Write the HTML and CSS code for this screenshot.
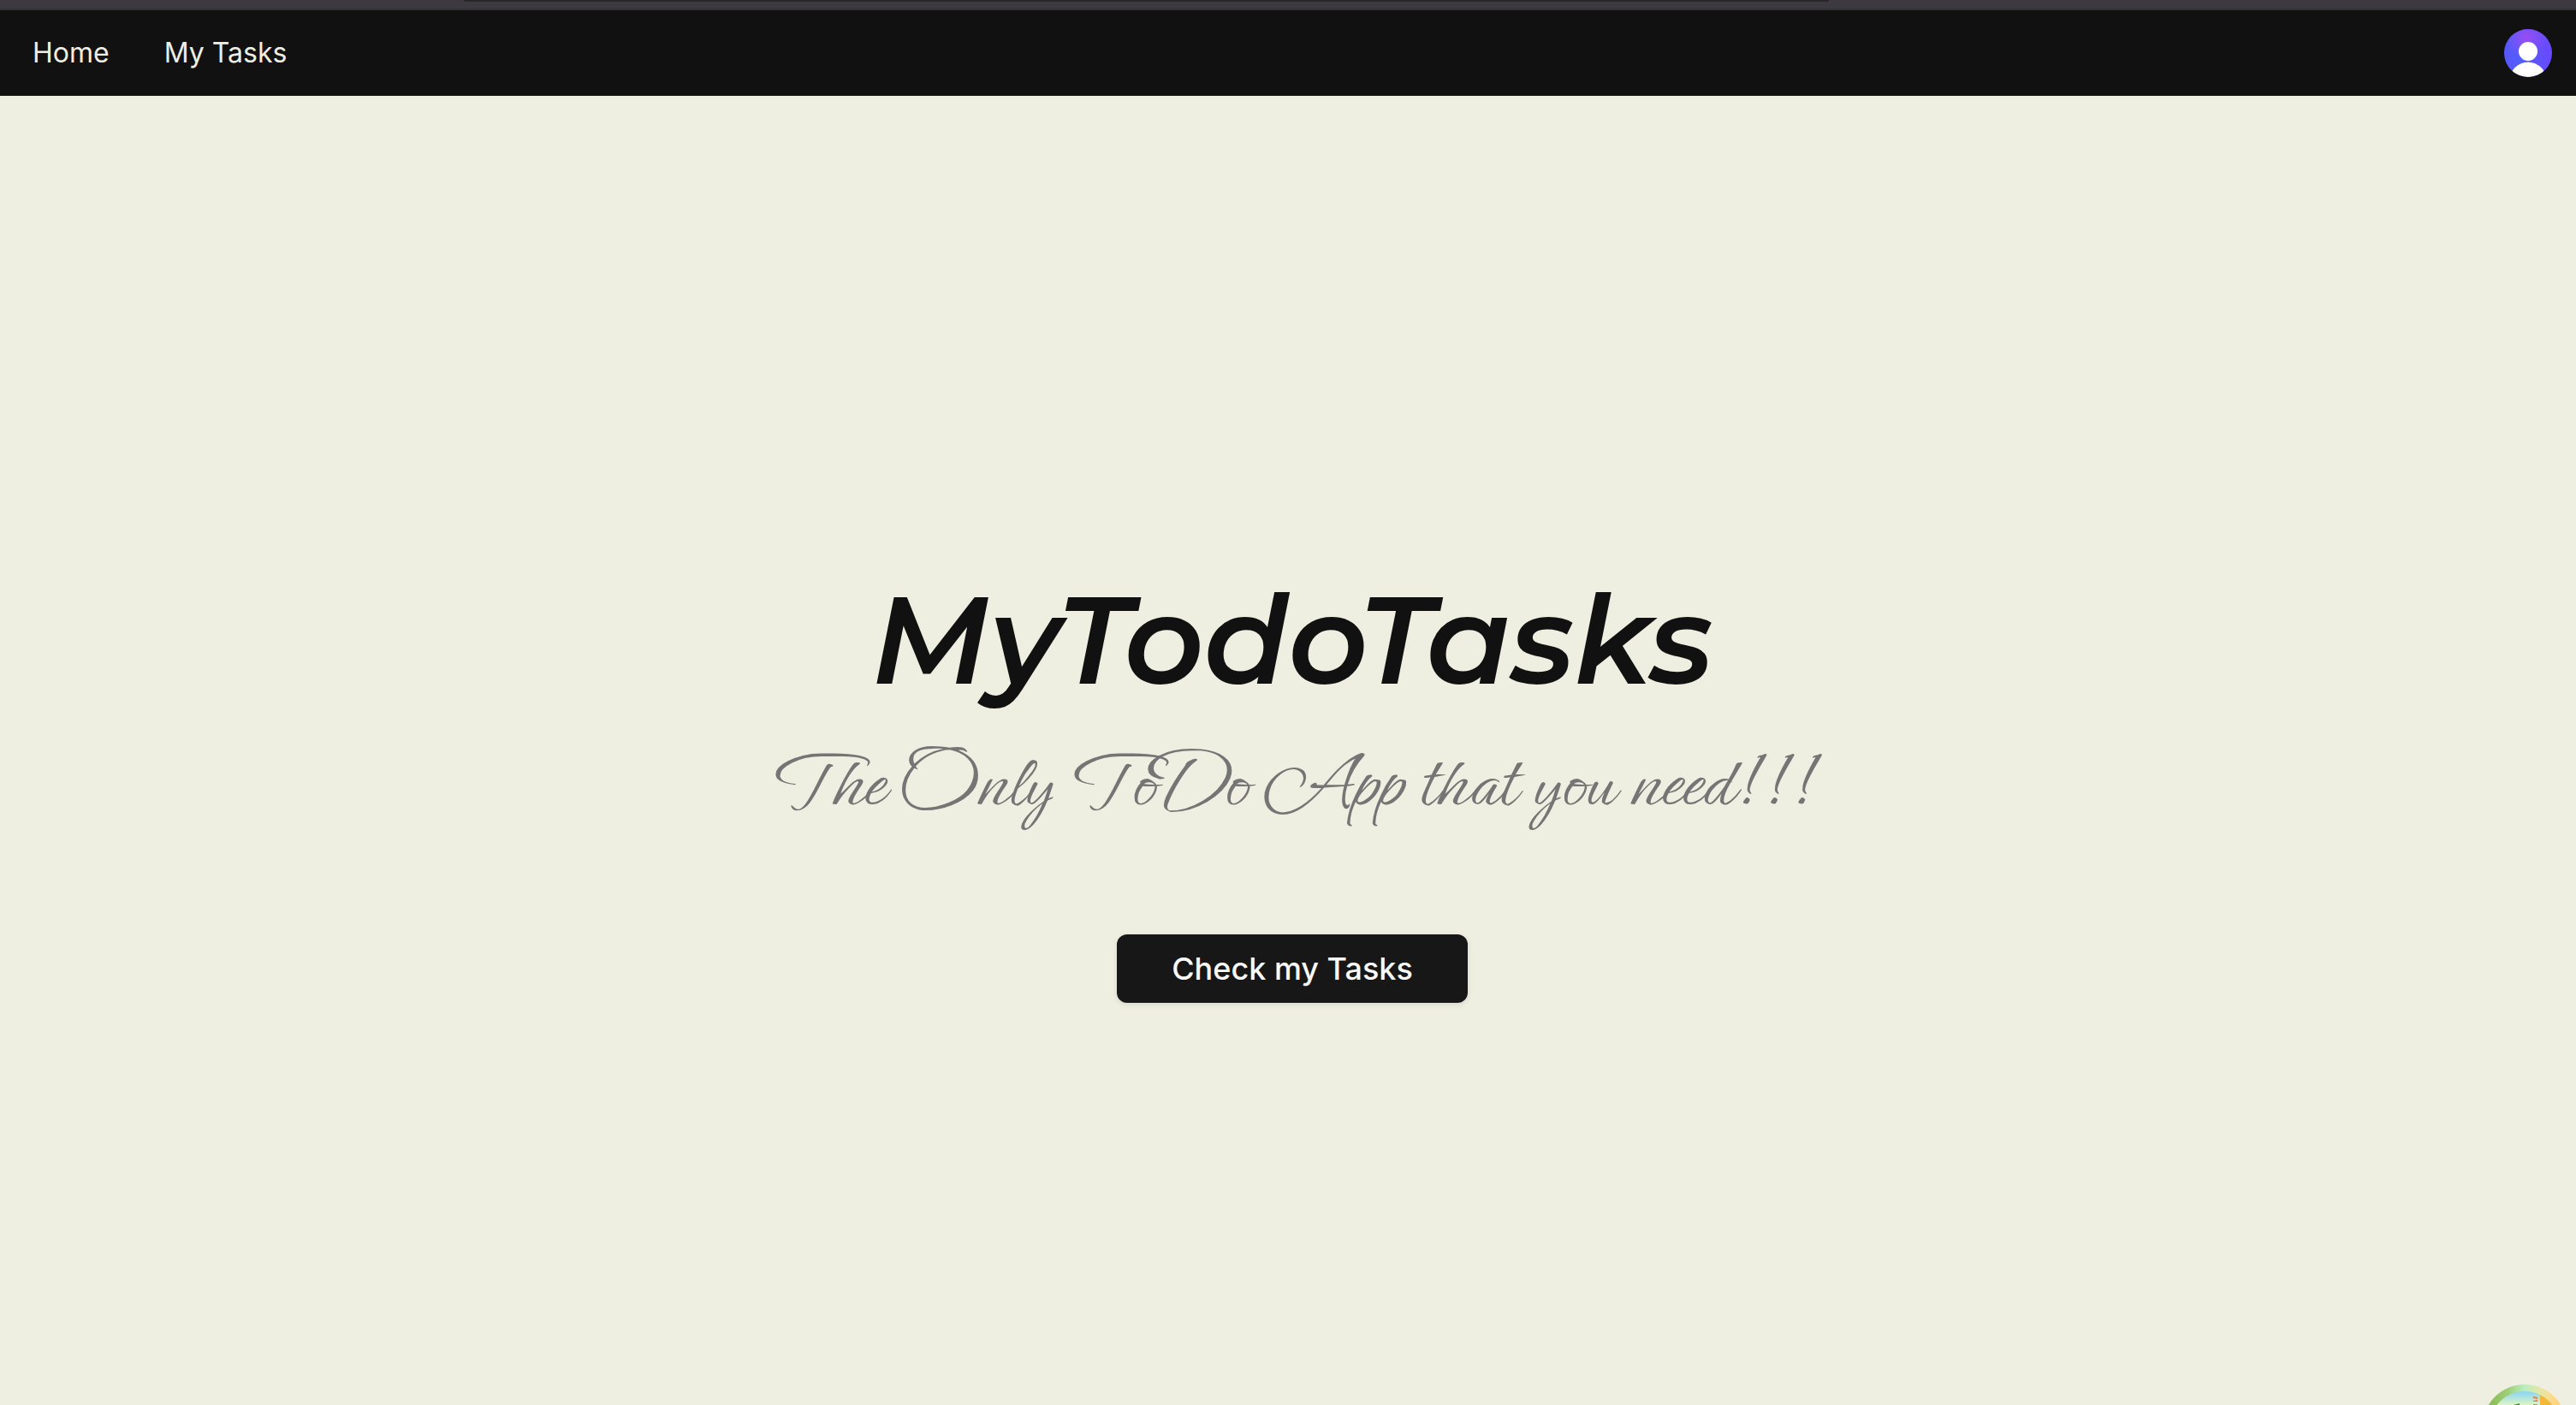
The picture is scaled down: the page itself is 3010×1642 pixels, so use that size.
FILE: index.html
```html
<!DOCTYPE html>
<html lang="en">
<head>
<meta charset="utf-8">
<meta name="viewport" content="width=device-width, initial-scale=1">
<title>MyTodoTasks</title>
<link rel="stylesheet" href="styles.css">
</head>
<body>
<div class="window-bar"><div class="window-field"></div></div>
<header class="navbar">
  <nav class="nav-links">
    <a href="#">Home</a>
    <a href="#tasks">My Tasks</a>
  </nav>
  <button class="avatar" type="button" aria-label="Account">
    <svg viewBox="0 0 56 56" aria-hidden="true">
      <defs>
        <radialGradient id="violet" cx="26" cy="10" r="24" gradientUnits="userSpaceOnUse"><stop offset="0" stop-color="#9a4df2"/><stop offset="1" stop-color="#9a4df2" stop-opacity="0"/></radialGradient>
        <linearGradient id="base" x1="0" y1="0.6" x2="1" y2="0.4"><stop offset="0" stop-color="#5758fa"/><stop offset="0.35" stop-color="#525cfb"/><stop offset="1" stop-color="#6c47ff"/></linearGradient>
        <clipPath id="disc"><circle cx="28" cy="28" r="28"/></clipPath>
      </defs>
      <g clip-path="url(#disc)">
        <rect width="56" height="56" fill="url(#base)"/>
        <rect width="56" height="56" fill="url(#violet)"/>
        <circle cx="28" cy="26" r="11" fill="#fff"/>
        <circle cx="28" cy="60" r="21.500" fill="#fff"/>
      </g>
    </svg>
  </button>
</header>
<main class="hero">
  <h1>MyTodoTasks</h1>
  <p class="tagline">The Only ToDo App that you need!!!</p>
  <button class="cta" type="button">Check my Tasks</button>
</main>
<svg class="badge" viewBox="0 0 98 98" aria-hidden="true">
  <defs>
    <linearGradient id="ring"><stop offset="0.05" stop-color="#86b94e"/><stop offset="0.3" stop-color="#9fce78"/><stop offset="0.5" stop-color="#b9edc0"/><stop offset="0.7" stop-color="#e8e6a4"/><stop offset="0.85" stop-color="#ffd883"/><stop offset="1" stop-color="#ffc860"/></linearGradient>
    <linearGradient id="sky" x2="0" y2="1"><stop offset="0.08" stop-color="#86d4f8"/><stop offset="0.25" stop-color="#e2f5c0"/><stop offset="1" stop-color="#f3f8b0"/></linearGradient>
    <clipPath id="face"><circle cx="49" cy="49" r="41"/></clipPath>
  </defs>
  <circle cx="49" cy="49" r="49" fill="url(#ring)"/>
  <g clip-path="url(#face)">
    <rect width="98" height="98" fill="url(#sky)"/>
    <path d="M67 10h31v80H67z" fill="#f5b738"/>
    <path d="M59 14l5 1v2l-5-1zM59 19l5-1v2h-5zM59 23h5v2h-5z" fill="#ec7a3c"/>
    <path d="M36 24l7-2v3h-4v-1z" fill="#4a913a"/>
  </g>
</svg>
</body>
</html>
```
FILE: styles.css
```css
* { box-sizing: border-box; }
html { height: 100%; }
body {
  position: relative;
  display: flex;
  flex-direction: column;
  min-height: 100%;
  margin: 0;
  overflow: hidden;
  background: #eeeee1;
  color: #111;
  font-family: Inter, sans-serif;
}
.window-bar {
  height: 12px;
  background: #3c3a40;
  border-bottom: 2px solid #323135;
}
.window-field {
  width: 53%;
  height: 2px;
  margin-left: 18%;
  border-radius: 0 0 8px 8px;
  background: #27262b;
}
.navbar {
  display: flex;
  align-items: center;
  justify-content: space-between;
  height: 100px;
  padding: 0 28px 0 38px;
  background: #111;
}
.nav-links { display: flex; gap: 64px; }
.nav-links a {
  color: #eeeee1;
  font-size: 32px;
  line-height: 40px;
  text-decoration: none;
}
button { border: 0; padding: 0; font: inherit; cursor: pointer; }
.avatar {
  width: 56px;
  height: 56px;
  border-radius: 50%;
  background: none;
}
.avatar svg { display: block; width: 100%; height: 100%; }
.hero {
  flex: 1;
  display: flex;
  flex-direction: column;
  align-items: center;
  justify-content: center;
  padding: 94px 0 0 10px;
}
h1 {
  margin: 0 0 48px;
  font-family: Montserrat, Inter, sans-serif;
  font-size: 144px;
  font-style: italic;
  font-weight: 600;
  line-height: 144px;
}
.tagline {
  margin: 0 0 128px;
  color: #757575;
  font-family: Ephesis, "Alex Brush", "Liberation Serif", serif;
  font-size: 96px;
  line-height: 96px;
}
.cta {
  height: 80px;
  padding: 0 64px;
  border-radius: 12px;
  background: #171717;
  color: #fafafa;
  font-size: 36px;
  font-weight: 500;
  box-shadow: 0 2px 6px rgba(0, 0, 0, 0.1);
}
.badge {
  position: absolute;
  right: 11px;
  bottom: -74px;
  width: 98px;
  height: 98px;
}
```
